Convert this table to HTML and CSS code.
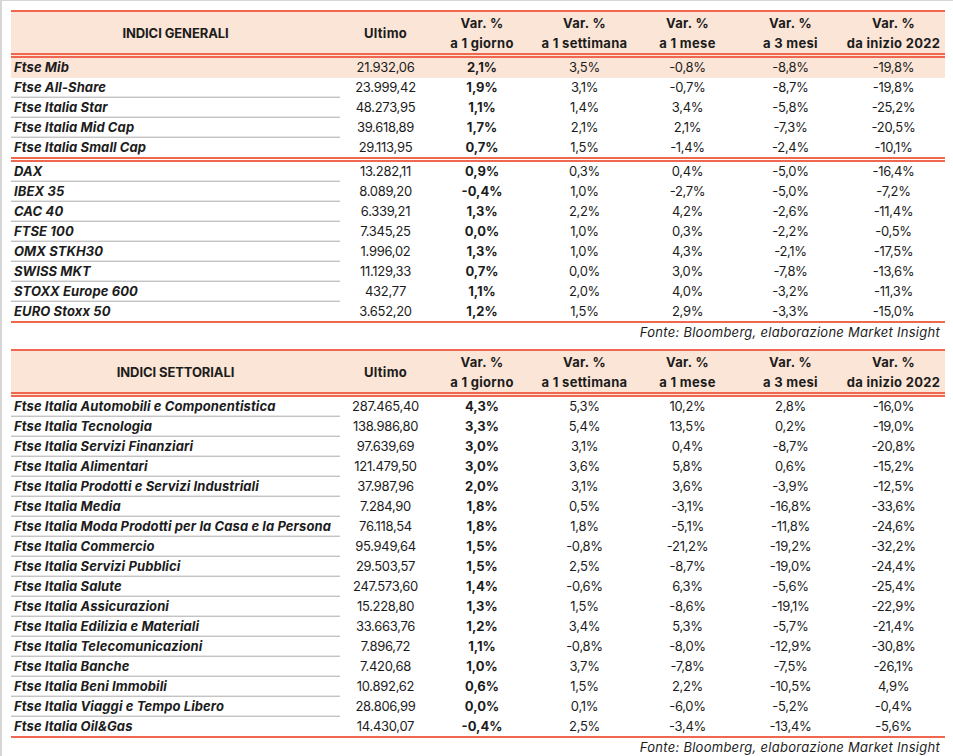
FILE: index.html
```html
<!DOCTYPE html>
<html lang="it">
<head>
<meta charset="utf-8">
<title>Indici</title>
<link rel="stylesheet" href="styles.css">
</head>
<body>
<div class="page">
  <table class="tbl">
    <colgroup>
      <col class="c-name"><col class="c-last"><col class="c-var"><col class="c-var2"><col class="c-var2"><col class="c-var2"><col class="c-var2">
    </colgroup>
    <thead>
      <tr class="head head-1">
        <th class="name-h">INDICI GENERALI</th><th>Ultimo</th><th>Var. %<br>a 1 giorno</th><th>Var. %<br>a 1 settimana</th><th>Var. %<br>a 1 mese</th><th>Var. %<br>a 3 mesi</th><th>Var. %<br>da inizio 2022</th>
      </tr>
    </thead>
    <tbody>
      <tr class="hl"><td class="name">Ftse Mib</td><td>21.932,06</td><td class="b">2,1%</td><td>3,5%</td><td>-0,8%</td><td>-8,8%</td><td>-19,8%</td></tr>
      <tr><td class="name">Ftse All-Share</td><td>23.999,42</td><td class="b">1,9%</td><td>3,1%</td><td>-0,7%</td><td>-8,7%</td><td>-19,8%</td></tr>
      <tr><td class="name">Ftse Italia Star</td><td>48.273,95</td><td class="b">1,1%</td><td>1,4%</td><td>3,4%</td><td>-5,8%</td><td>-25,2%</td></tr>
      <tr><td class="name">Ftse Italia Mid Cap</td><td>39.618,89</td><td class="b">1,7%</td><td>2,1%</td><td>2,1%</td><td>-7,3%</td><td>-20,5%</td></tr>
      <tr class="grp-end"><td class="name">Ftse Italia Small Cap</td><td>29.113,95</td><td class="b">0,7%</td><td>1,5%</td><td>-1,4%</td><td>-2,4%</td><td>-10,1%</td></tr>
      <tr><td class="name">DAX</td><td>13.282,11</td><td class="b">0,9%</td><td>0,3%</td><td>0,4%</td><td>-5,0%</td><td>-16,4%</td></tr>
      <tr><td class="name">IBEX 35</td><td>8.089,20</td><td class="b">-0,4%</td><td>1,0%</td><td>-2,7%</td><td>-5,0%</td><td>-7,2%</td></tr>
      <tr><td class="name">CAC 40</td><td>6.339,21</td><td class="b">1,3%</td><td>2,2%</td><td>4,2%</td><td>-2,6%</td><td>-11,4%</td></tr>
      <tr><td class="name">FTSE 100</td><td>7.345,25</td><td class="b">0,0%</td><td>1,0%</td><td>0,3%</td><td>-2,2%</td><td>-0,5%</td></tr>
      <tr><td class="name">OMX STKH30</td><td>1.996,02</td><td class="b">1,3%</td><td>1,0%</td><td>4,3%</td><td>-2,1%</td><td>-17,5%</td></tr>
      <tr><td class="name">SWISS MKT</td><td>11.129,33</td><td class="b">0,7%</td><td>0,0%</td><td>3,0%</td><td>-7,8%</td><td>-13,6%</td></tr>
      <tr><td class="name">STOXX Europe 600</td><td>432,77</td><td class="b">1,1%</td><td>2,0%</td><td>4,0%</td><td>-3,2%</td><td>-11,3%</td></tr>
      <tr class="last"><td class="name">EURO Stoxx 50</td><td>3.652,20</td><td class="b">1,2%</td><td>1,5%</td><td>2,9%</td><td>-3,3%</td><td>-15,0%</td></tr>
    </tbody>
  </table>
  <p class="source">Fonte: Bloomberg, elaborazione Market Insight</p>

  <table class="tbl">
    <colgroup>
      <col class="c-name"><col class="c-last"><col class="c-var"><col class="c-var2"><col class="c-var2"><col class="c-var2"><col class="c-var2">
    </colgroup>
    <thead>
      <tr class="head head-2">
        <th class="name-h">INDICI SETTORIALI</th><th>Ultimo</th><th>Var. %<br>a 1 giorno</th><th>Var. %<br>a 1 settimana</th><th>Var. %<br>a 1 mese</th><th>Var. %<br>a 3 mesi</th><th>Var. %<br>da inizio 2022</th>
      </tr>
    </thead>
    <tbody>
      <tr><td class="name">Ftse Italia Automobili e Componentistica</td><td>287.465,40</td><td class="b">4,3%</td><td>5,3%</td><td>10,2%</td><td>2,8%</td><td>-16,0%</td></tr>
      <tr><td class="name">Ftse Italia Tecnologia</td><td>138.986,80</td><td class="b">3,3%</td><td>5,4%</td><td>13,5%</td><td>0,2%</td><td>-19,0%</td></tr>
      <tr><td class="name">Ftse Italia Servizi Finanziari</td><td>97.639,69</td><td class="b">3,0%</td><td>3,1%</td><td>0,4%</td><td>-8,7%</td><td>-20,8%</td></tr>
      <tr><td class="name">Ftse Italia Alimentari</td><td>121.479,50</td><td class="b">3,0%</td><td>3,6%</td><td>5,8%</td><td>0,6%</td><td>-15,2%</td></tr>
      <tr><td class="name">Ftse Italia Prodotti e Servizi Industriali</td><td>37.987,96</td><td class="b">2,0%</td><td>3,1%</td><td>3,6%</td><td>-3,9%</td><td>-12,5%</td></tr>
      <tr><td class="name">Ftse Italia Media</td><td>7.284,90</td><td class="b">1,8%</td><td>0,5%</td><td>-3,1%</td><td>-16,8%</td><td>-33,6%</td></tr>
      <tr><td class="name">Ftse Italia Moda Prodotti per la Casa e la Persona</td><td>76.118,54</td><td class="b">1,8%</td><td>1,8%</td><td>-5,1%</td><td>-11,8%</td><td>-24,6%</td></tr>
      <tr><td class="name">Ftse Italia Commercio</td><td>95.949,64</td><td class="b">1,5%</td><td>-0,8%</td><td>-21,2%</td><td>-19,2%</td><td>-32,2%</td></tr>
      <tr><td class="name">Ftse Italia Servizi Pubblici</td><td>29.503,57</td><td class="b">1,5%</td><td>2,5%</td><td>-8,7%</td><td>-19,0%</td><td>-24,4%</td></tr>
      <tr><td class="name">Ftse Italia Salute</td><td>247.573,60</td><td class="b">1,4%</td><td>-0,6%</td><td>6,3%</td><td>-5,6%</td><td>-25,4%</td></tr>
      <tr><td class="name">Ftse Italia Assicurazioni</td><td>15.228,80</td><td class="b">1,3%</td><td>1,5%</td><td>-8,6%</td><td>-19,1%</td><td>-22,9%</td></tr>
      <tr><td class="name">Ftse Italia Edilizia e Materiali</td><td>33.663,76</td><td class="b">1,2%</td><td>3,4%</td><td>5,3%</td><td>-5,7%</td><td>-21,4%</td></tr>
      <tr><td class="name">Ftse Italia Telecomunicazioni</td><td>7.896,72</td><td class="b">1,1%</td><td>-0,8%</td><td>-8,0%</td><td>-12,9%</td><td>-30,8%</td></tr>
      <tr><td class="name">Ftse Italia Banche</td><td>7.420,68</td><td class="b">1,0%</td><td>3,7%</td><td>-7,8%</td><td>-7,5%</td><td>-26,1%</td></tr>
      <tr><td class="name">Ftse Italia Beni Immobili</td><td>10.892,62</td><td class="b">0,6%</td><td>1,5%</td><td>2,2%</td><td>-10,5%</td><td>4,9%</td></tr>
      <tr><td class="name">Ftse Italia Viaggi e Tempo Libero</td><td>28.806,99</td><td class="b">0,0%</td><td>0,1%</td><td>-6,0%</td><td>-5,2%</td><td>-0,4%</td></tr>
      <tr class="last"><td class="name">Ftse Italia Oil&amp;Gas</td><td>14.430,07</td><td class="b">-0,4%</td><td>2,5%</td><td>-3,4%</td><td>-13,4%</td><td>-5,6%</td></tr>
    </tbody>
  </table>
  <p class="source">Fonte: Bloomberg, elaborazione Market Insight</p>
</div>
</body>
</html>
```

FILE: styles.css
```css
html, body {
  margin: 0;
  padding: 0;
  background: #ffffff;
}

body {
  font-family: "Inter", "Liberation Sans", sans-serif;
  font-size: 13px;
  color: #1c1c1c;
}

.page {
  border-top: 1px solid #d6d6d6;
  border-left: 2px solid #d6d6d6;
  padding: 9px 0 0 9px;
  height: 746px;
  overflow: hidden;
}

.tbl {
  width: 934px;
  table-layout: fixed;
  border-collapse: separate;
  border-spacing: 0;
  border-top: 2px solid #f0674f;
}

.c-name { width: 329px; }
.c-last { width: 91px; }
.c-var { width: 102px; }
.c-var2 { width: 103px; }

.head th {
  background: #fbe5d6;
  font-weight: 700;
  text-align: center;
  line-height: 20px;
  padding: 1px 0 0;
  vertical-align: middle;
  letter-spacing: 0.3px;
  border-bottom: 5px double #f0674f;
}

.head-1 { height: 46px; }
.head-2 { height: 44px; }

.head th.name-h {
  letter-spacing: -0.1px;
}

tbody tr { height: 20px; }

tbody td {
  padding: 0;
  line-height: 19px;
  text-align: center;
  vertical-align: middle;
  white-space: nowrap;
  border-bottom: 1px solid transparent;
  font-weight: 400;
  letter-spacing: -0.3px;
}

tbody td.name {
  text-align: left;
  padding-left: 3px;
  font-weight: 700;
  font-style: italic;
  letter-spacing: 0.1px;
  border-bottom: 1px solid #c4c4c4;
  box-shadow: inset 0 -1px 0 #e6e6e6;
}

tbody td.b { font-weight: 700; letter-spacing: 0; }

tbody tr.hl td,
tbody tr.hl td.name { background: #fbe5d6; border-bottom-color: transparent; box-shadow: none; }

tbody tr.grp-end { height: 24px; }
tbody tr.grp-end td,
tbody tr.grp-end td.name { border-bottom: 5px double #f0674f; box-shadow: none; }

tbody tr.last { height: 21px; }
tbody tr.last td,
tbody tr.last td.name { border-bottom: 2px solid #f0674f; box-shadow: none; }

.source {
  margin: 0;
  width: 934px;
  height: 26px;
  line-height: 18px;
  text-align: right;
  font-style: italic;
  box-sizing: border-box;
  padding: 0 5px 0 0;
  letter-spacing: 0.27px;
  color: #1c1c1c;
}
```
